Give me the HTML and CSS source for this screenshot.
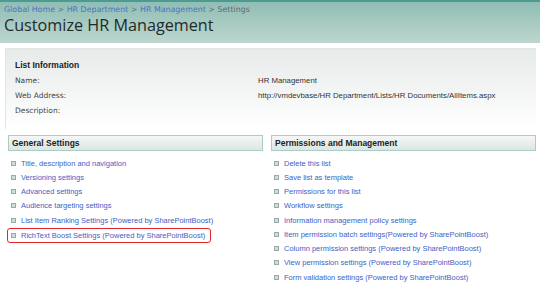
FILE: index.html
```html
<!DOCTYPE html>
<html lang="en">
<head>
  <meta charset="UTF-8">
  <title>Customize HR Management</title>
  <link rel="stylesheet" href="styles.css">
</head>
<body>
  <!-- title area -->
  <div class="title-area">
    <div class="crumbs">
      <a href="#">Global Home</a> &gt; <a href="#">HR Department</a> &gt; <a href="#">HR Management</a> &gt; <span>Settings</span>
    </div>
    <h1>Customize HR Management</h1>
  </div>

  <div class="content">
    <!-- list information -->
    <div class="list-info">
      <div class="info-head">List Information</div>
      <div class="info-row"><span class="info-label">Name:</span><span>HR Management</span></div>
      <div class="info-row"><span class="info-label">Web Address:</span><span>http://vmdevbase/HR Department/Lists/HR Documents/AllItems.aspx</span></div>
      <div class="info-row"><span class="info-label">Description:</span><span></span></div>
    </div>

    <div class="columns">
      <div class="col col-left">
        <div class="col-head">General Settings</div>
        <ul class="links">
          <li><a href="#">Title, description and navigation</a></li>
          <li><a href="#">Versioning settings</a></li>
          <li><a href="#">Advanced settings</a></li>
          <li><a href="#">Audience targeting settings</a></li>
          <li><a href="#">List Item Ranking Settings (Powered by SharePointBoost)</a></li>
          <li class="marked"><a href="#">RichText Boost Settings (Powered by SharePointBoost)</a></li>
        </ul>
      </div>
      <div class="col">
        <div class="col-head">Permissions and Management</div>
        <ul class="links">
          <li><a href="#">Delete this list</a></li>
          <li><a href="#">Save list as template</a></li>
          <li><a href="#">Permissions for this list</a></li>
          <li><a href="#">Workflow settings</a></li>
          <li><a href="#">Information management policy settings</a></li>
          <li><a href="#">Item permission batch settings(Powered by SharePointBoost)</a></li>
          <li><a href="#">Column permission settings (Powered by SharePointBoost)</a></li>
          <li><a href="#">View permission settings (Powered by SharePointBoost)</a></li>
          <li><a href="#">Form validation settings (Powered by SharePointBoost)</a></li>
        </ul>
      </div>
    </div>
  </div>
</body>
</html>
```

FILE: styles.css
```css
body {
  margin: 0;
  font-family: "DejaVu Sans", Verdana, sans-serif;
  font-size: 8px;
  color: #333;
  background: #fff;
}
a {
  color: #3e62c6;
  text-decoration: none;
}
/* title area */
.title-area {
  height: 41px;
  border-top: 2px solid #4d9a90;
  background: linear-gradient(#8fbeb4, #bed5cf);
  padding: 0 4px;
}
.crumbs {
  padding-top: 3px;
  font-size: 7.9px;
  color: #667;
}
.crumbs a {
  color: #4a72c4;
}
.title-area h1 {
  margin: 1px 0 0;
  font-family: "Open Sans", "Noto Sans", sans-serif;
  font-weight: normal;
  font-size: 16.2px;
  line-height: 20px;
  color: #1e2a2a;
}
.content {
  padding: 5px 4px 0 5px;
}
/* list information */
.list-info {
  background: linear-gradient(#e6eae9, #fafbfb 80%, #fff);
  border-top: 1px solid #e3e6e5;
  border-left: 1px solid #e3e6e5;
  padding: 11px 0 8px 9px;
  height: 61px;
}
.info-head {
  font-family: "Liberation Sans", Arial, sans-serif;
  font-weight: bold;
  font-size: 8.5px;
  color: #222;
  margin-bottom: 3px;
}
.info-row {
  display: flex;
  align-items: center;
  height: 15px;
  font-family: "Liberation Sans", Arial, sans-serif;
  font-size: 7.8px;
  color: #333;
}
.info-label {
  width: 243px;
  flex: none;
  font-family: "DejaVu Sans", Verdana, sans-serif;
  font-size: 7.5px;
  color: #444;
}
/* settings columns */
.columns {
  display: flex;
  gap: 8px;
  margin-top: 6px;
  padding-left: 3px;
}
.col {
  flex: 1;
}
.col-left {
  flex: none;
  width: 255px;
}
.col-head {
  height: 14px;
  line-height: 14px;
  border: 1px solid #a9cdc6;
  background: linear-gradient(#f4f7f6, #dde6e3);
  padding-left: 3px;
  font-family: "Liberation Sans", Arial, sans-serif;
  font-weight: bold;
  font-size: 8.5px;
  color: #222;
}
.links {
  list-style: none;
  margin: 5px 0 0;
  padding: 0 0 0 3px;
}
.links li {
  display: flex;
  align-items: center;
  height: 14.25px;
  font-family: "Liberation Sans", Arial, sans-serif;
  font-size: 7.5px;
}
.links li::before {
  content: "";
  width: 3px;
  height: 3px;
  border: 1px solid #9aa;
  background: #cdd;
  margin-right: 5px;
  flex: none;
}
.links li.marked {
  width: fit-content;
  margin: 1px 0 0 -4px;
  padding: 0 5px 0 3px;
  border: 1.5px solid #e3262a;
  border-radius: 3px;
  height: 13px;
}
```
